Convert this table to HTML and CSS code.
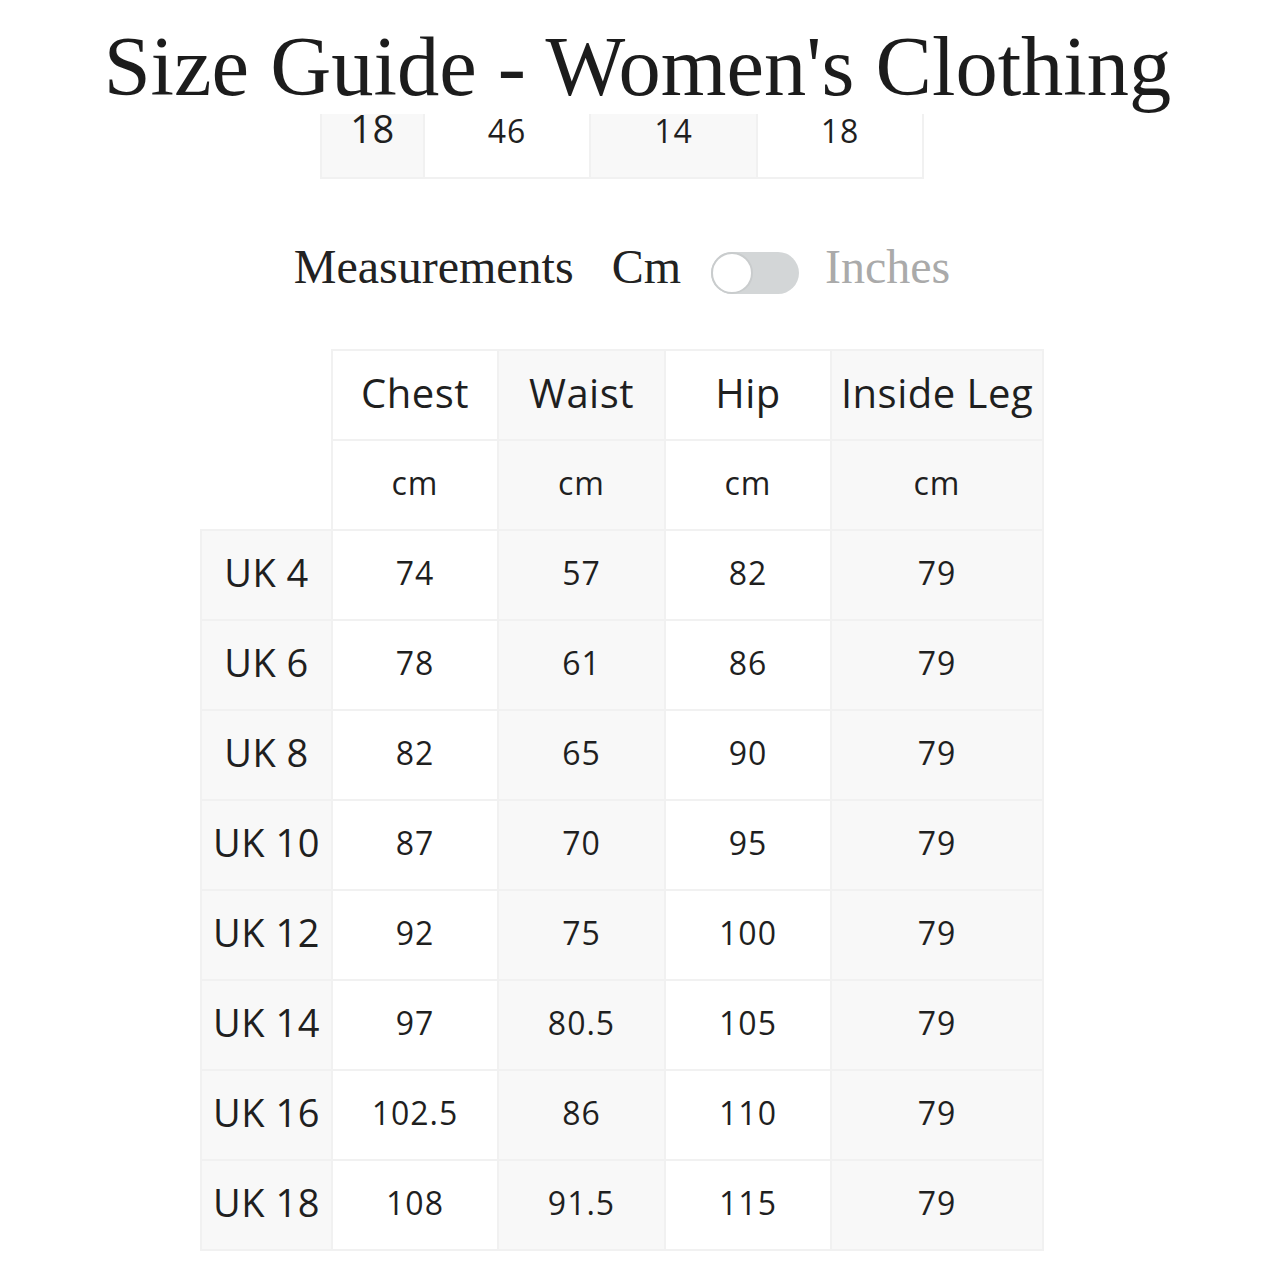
FILE: index.html
```html
<!DOCTYPE html>
<html lang="en">
<head>
<meta charset="utf-8">
<title>Size Guide - Women's Clothing</title>
<link rel="stylesheet" href="styles.css">
</head>
<body>
<h1 class="title">Size Guide - Women's Clothing</h1>
<div class="page">
  <table class="grid frag-table">
    <colgroup><col class="c-f1"><col class="c-f2"><col class="c-f3"><col class="c-f4"></colgroup>
    <tr><th class="rh">18</th><td>46</td><td class="alt">14</td><td>18</td></tr>
  </table>

  <div class="units">
    <span class="label">Measurements</span>
    <span class="unit">Cm</span>
    <span class="toggle"><span class="knob"></span></span>
    <span class="unit off">Inches</span>
  </div>

  <table class="grid size-table">
    <colgroup><col class="c-rh"><col class="c-d"><col class="c-d2"><col class="c-d"><col class="c-leg"></colgroup>
    <tr class="head">
      <td class="corner" rowspan="2"></td>
      <th>Chest</th><th class="alt">Waist</th><th>Hip</th><th class="alt">Inside Leg</th>
    </tr>
    <tr>
      <td>cm</td><td class="alt">cm</td><td>cm</td><td class="alt">cm</td>
    </tr>
    <tr><th class="rh">UK 4</th><td>74</td><td class="alt">57</td><td>82</td><td class="alt">79</td></tr>
    <tr><th class="rh">UK 6</th><td>78</td><td class="alt">61</td><td>86</td><td class="alt">79</td></tr>
    <tr><th class="rh">UK 8</th><td>82</td><td class="alt">65</td><td>90</td><td class="alt">79</td></tr>
    <tr><th class="rh">UK 10</th><td>87</td><td class="alt">70</td><td>95</td><td class="alt">79</td></tr>
    <tr><th class="rh">UK 12</th><td>92</td><td class="alt">75</td><td>100</td><td class="alt">79</td></tr>
    <tr><th class="rh">UK 14</th><td>97</td><td class="alt">80.5</td><td>105</td><td class="alt">79</td></tr>
    <tr><th class="rh">UK 16</th><td>102.5</td><td class="alt">86</td><td>110</td><td class="alt">79</td></tr>
    <tr><th class="rh">UK 18</th><td>108</td><td class="alt">91.5</td><td>115</td><td class="alt">79</td></tr>
  </table>
</div>
</body>
</html>
```

FILE: styles.css
```css
html, body {
  margin: 0;
  padding: 0;
  background: #ffffff;
}

body {
  color: #222222;
  font-family: "Open Sans", "Noto Sans", sans-serif;
}

.title {
  margin: 20px 0 0 0;
  padding-right: 5px;
  font-family: "Liberation Serif", "Times New Roman", serif;
  font-weight: 400;
  font-size: 84.5px;
  line-height: 94px;
  text-align: center;
  color: #1c1c1c;
}

.page {
  width: 1244px;
  display: flex;
  flex-direction: column;
  align-items: center;
}

/* shared grid table */
.grid {
  border-collapse: collapse;
  table-layout: fixed;
}

.grid tr {
  height: 90px;
}

.grid th,
.grid td {
  border: 2px solid #f1f1f1;
  padding: 0 0 6px 0;
  text-align: center;
  vertical-align: middle;
  background: #ffffff;
  font-weight: 500;
  font-size: 32px;
  letter-spacing: 1px;
  color: #1f1f1f;
}

.grid th {
  font-size: 40px;
  letter-spacing: 0.5px;
}

.grid .alt {
  background: #f8f8f8;
}

.grid .rh {
  background: #f8f8f8;
  font-size: 38px;
  letter-spacing: 0.5px;
}

.grid .corner {
  border: none;
  background: #ffffff;
}

/* fragment of the previous table, scrolled under the title */
.frag-table {
  width: 602px;
  margin-bottom: 58px;
}

.frag-table tr {
  height: 64px;
}

.frag-table td,
.frag-table th {
  border-top: none;
  vertical-align: top;
  padding: 1px 0 0 0;
  line-height: 31px;
}

.frag-table .rh {
  padding-top: 0;
  line-height: 28px;
}

.c-f1 { width: 103px; }
.c-f2 { width: 166px; }
.c-f3 { width: 167px; }
.c-f4 { width: 166px; }

/* measurement switch */
.units {
  display: flex;
  align-items: flex-start;
  height: 60px;
  line-height: 60px;
  font-family: "Liberation Serif", "Times New Roman", serif;
  font-size: 48px;
  color: #222222;
  margin-bottom: 52px;
}

.label {
  margin-right: 38px;
}

.unit.off {
  color: #aaaaaa;
}

.toggle {
  margin: 15px 26px 0 30px;
  width: 88px;
  height: 42px;
  border-radius: 21px;
  background: #d3d6d7;
  display: flex;
}

.knob {
  width: 38px;
  height: 38px;
  border-radius: 50%;
  background: #ffffff;
  border: 2px solid #c9cccd;
}

/* main size table */
.size-table {
  width: 842px;
}

.c-rh { width: 131px; }
.c-d { width: 166px; }
.c-d2 { width: 167px; }
.c-leg { width: 212px; }
```
